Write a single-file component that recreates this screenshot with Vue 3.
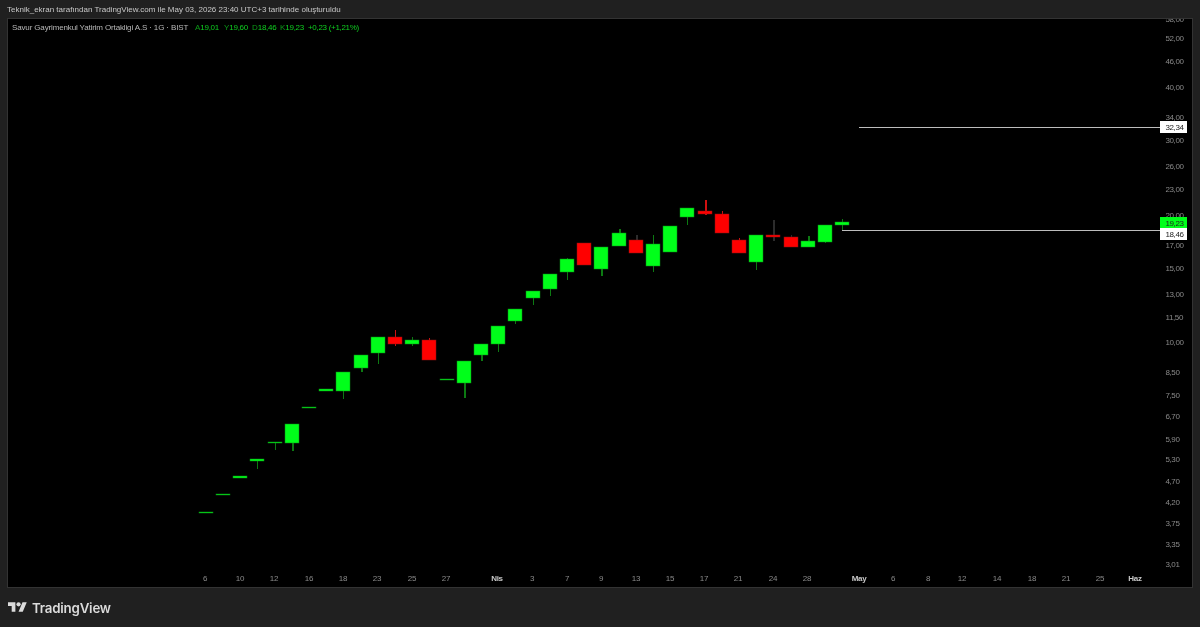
<script setup>
// [top of wick, top of body, bottom of body, bottom of wick, up?]
const raw = [
  [512, 512, 513, 513, 1], [494, 494, 495, 495, 1], [476, 476, 478, 478, 1],
  [459, 459, 461, 469, 1], [442, 442, 443, 450, 1], [424, 424, 443, 451, 1],
  [407, 407, 408, 408, 1], [389, 389, 391, 391, 1], [372, 372, 391, 399, 1],
  [355, 355, 368, 372, 1], [337, 337, 353, 364, 1], [330, 337, 344, 346, 0],
  [337, 340, 344, 346, 1], [338, 340, 360, 360, 0], [379, 379, 380, 380, 1],
  [361, 361, 383, 398, 1], [344, 344, 355, 361, 1], [326, 326, 344, 352, 1],
  [309, 309, 321, 324, 1], [291, 291, 298, 305, 1], [274, 274, 289, 296, 1],
  [258, 259, 272, 280, 1], [243, 243, 265, 265, 0], [247, 247, 269, 276, 1],
  [229, 233, 246, 246, 1], [235, 240, 253, 253, 0], [235, 244, 266, 272, 1],
  [226, 226, 252, 252, 1], [208, 208, 217, 225, 1], [200, 211, 214, 215, 0],
  [211, 214, 233, 233, 0], [238, 240, 253, 253, 0], [235, 235, 262, 270, 1],
  [220, 235, 237, 241, 0], [235, 237, 247, 247, 0], [236, 241, 247, 247, 1],
  [225, 225, 242, 243, 1], [219, 222, 225, 230, 1],
];

// some wicks come out thicker, and a few of the red ones nearly grey
const thick = [5, 9, 15, 16, 23, 24, 25, 29, 33, 35];
const dim = [25, 33, 34];

const candles = raw.map((c, i) => ({
  x: Math.round(205.7 + 17.2 * i),
  wickTop: c[0],
  top: c[1],
  bottom: c[2],
  wickBottom: c[3],
  up: c[4] === 1,
  wickWidth: thick.includes(i) ? 2 : 1,
  wickClass: dim.includes(i) ? "wick-dim" : c[4] === 1 ? "wick-up" : "wick-down",
}));

const ohlc = [
  { x: 195, label: "A", value: "19,01" },
  { x: 224, label: "Y", value: "19,60" },
  { x: 252, label: "D", value: "18,46" },
  { x: 280, label: "K", value: "19,23" },
];

const prices = [
  ["58,00", 19], ["52,00", 38], ["46,00", 61], ["40,00", 87], ["34,00", 117],
  ["30,00", 140], ["26,00", 166], ["23,00", 189], ["20,00", 215], ["17,00", 245],
  ["15,00", 268], ["13,00", 294], ["11,50", 317], ["10,00", 342], ["8,50", 372],
  ["7,50", 395], ["6,70", 416], ["5,90", 439], ["5,30", 459], ["4,70", 481],
  ["4,20", 502], ["3,75", 523], ["3,35", 544], ["3,01", 564],
];

const dates = [
  ["6", 205], ["10", 240], ["12", 274], ["16", 309], ["18", 343], ["23", 377],
  ["25", 412], ["27", 446], ["Nis", 497, true], ["3", 532], ["7", 567], ["9", 601],
  ["13", 636], ["15", 670], ["17", 704], ["21", 738], ["24", 773], ["28", 807],
  ["May", 859, true], ["6", 893], ["8", 928], ["12", 962], ["14", 997], ["18", 1032],
  ["21", 1066], ["25", 1100], ["Haz", 1135, true],
];
</script>

<template>
  <div class="page">
    <div class="caption">Teknik_ekran tarafından TradingView.com ile May 03, 2026 23:40 UTC+3 tarihinde oluşturuldu</div>

    <div class="panel">
      <svg class="chart" width="1184" height="568" viewBox="8 19 1184 568">
        <text class="legend" x="12" y="30">
          <tspan class="legend-name">Savur Gayrimenkul Yatirim Ortakligi A.S · 1G · BIST</tspan>
          <template v-for="o in ohlc" :key="o.label">
            <tspan class="legend-label" :x="o.x">{{ o.label }}</tspan><tspan class="legend-val">{{ o.value }}</tspan>
          </template>
          <tspan class="legend-val" x="308">+0,23 (+1,21%)</tspan>
        </text>

        <g v-for="(c, i) in candles" :key="i">
          <rect :x="c.x" :y="c.wickTop" :width="c.wickWidth" :height="c.wickBottom - c.wickTop" :class="c.wickClass" shape-rendering="crispEdges" />
          <rect :x="c.x - 7" :y="c.top" width="14" :height="Math.max(c.bottom - c.top, 1)" :class="c.up ? 'body-up' : 'body-down'" />
        </g>

        <rect x="859" y="127" width="301" height="1" class="level" />
        <rect x="842" y="230" width="318" height="1" class="level" />

        <text v-for="p in prices" :key="p[0]" class="price" x="1165.5" :y="p[1] + 3">{{ p[0] }}</text>

        <rect x="1160" y="121" width="27" height="12" class="tag-white" />
        <text class="tag-text" x="1165.5" y="130">32,34</text>
        <rect x="1160" y="217" width="27" height="11" class="tag-green" />
        <text class="tag-text" x="1165.5" y="225.5">19,23</text>
        <rect x="1160" y="228" width="27" height="12" class="tag-white" />
        <text class="tag-text" x="1165.5" y="237">18,46</text>

        <text
          v-for="d in dates"
          :key="d[0] + d[1]"
          :class="d[2] ? 'month' : 'date'"
          :x="d[1]"
          y="581"
        >{{ d[0] }}</text>
      </svg>
    </div>

    <div class="footer">
      <svg class="logo" width="19" height="15" viewBox="0 0 36 28" fill="#dbdbdb">
        <path d="M14 22H7V11H0V4h14v18zM28 22h-8l7.5-18h8L28 22z" />
        <circle cx="20" cy="8" r="4" />
      </svg>
      <span class="brand">TradingView</span>
    </div>
  </div>
</template>

<style>
html,
body {
  margin: 0;
  background: #202020;
}
</style>

<style scoped>
.page {
  width: 1200px;
  height: 627px;
  display: flex;
  flex-direction: column;
  background: #202020;
  font-family: "Liberation Sans", Arial, sans-serif;
  overflow: hidden;
}

.caption {
  height: 18px;
  padding-left: 7px;
  font-size: 8px;
  line-height: 19px;
  color: #c8c8c8;
  will-change: transform;
}

.panel {
  width: 1186px;
  height: 570px;
  margin-left: 7px;
  border: 1px solid #333333;
  box-sizing: border-box;
  background: #000000;
}

.chart {
  display: block;
  will-change: transform;
}

.legend {
  font-size: 8px;
}

.legend-name {
  fill: #b8b8b8;
  letter-spacing: -0.14px;
}

.legend-label {
  fill: #0c9a18;
}

.legend-val {
  fill: #0fd020;
  letter-spacing: -0.3px;
}

.wick-up {
  fill: #0c7a12;
}

.wick-down {
  fill: #d01010;
}

.wick-dim {
  fill: #2c2c2c;
}

.body-up {
  fill: #00ff1a;
  stroke: #0b8a14;
  stroke-width: 0.5;
}

.body-down {
  fill: #ff0000;
  stroke: #8a1010;
  stroke-width: 0.5;
}

.level {
  fill: #bdbdbd;
}

.price {
  font-size: 8px;
  fill: #8a8a8a;
  letter-spacing: -0.4px;
}

.tag-white {
  fill: #ffffff;
}

.tag-green {
  fill: #00ff1a;
}

.tag-text {
  font-size: 8px;
  fill: #222222;
  letter-spacing: -0.4px;
}

.date {
  font-size: 8px;
  fill: #8a8a8a;
  letter-spacing: -0.3px;
  text-anchor: middle;
}

.month {
  font-size: 8px;
  font-weight: 700;
  fill: #c8c8c8;
  letter-spacing: -0.3px;
  text-anchor: middle;
}

.footer {
  flex: 1;
  display: flex;
  align-items: center;
  gap: 5px;
  padding-left: 8px;
}

.logo {
  display: block;
}

.brand {
  font-family: Inter, "Liberation Sans", sans-serif;
  font-size: 13.3px;
  font-weight: 600;
  color: #dbdbdb;
  letter-spacing: -0.2px;
  will-change: transform;
}
</style>
